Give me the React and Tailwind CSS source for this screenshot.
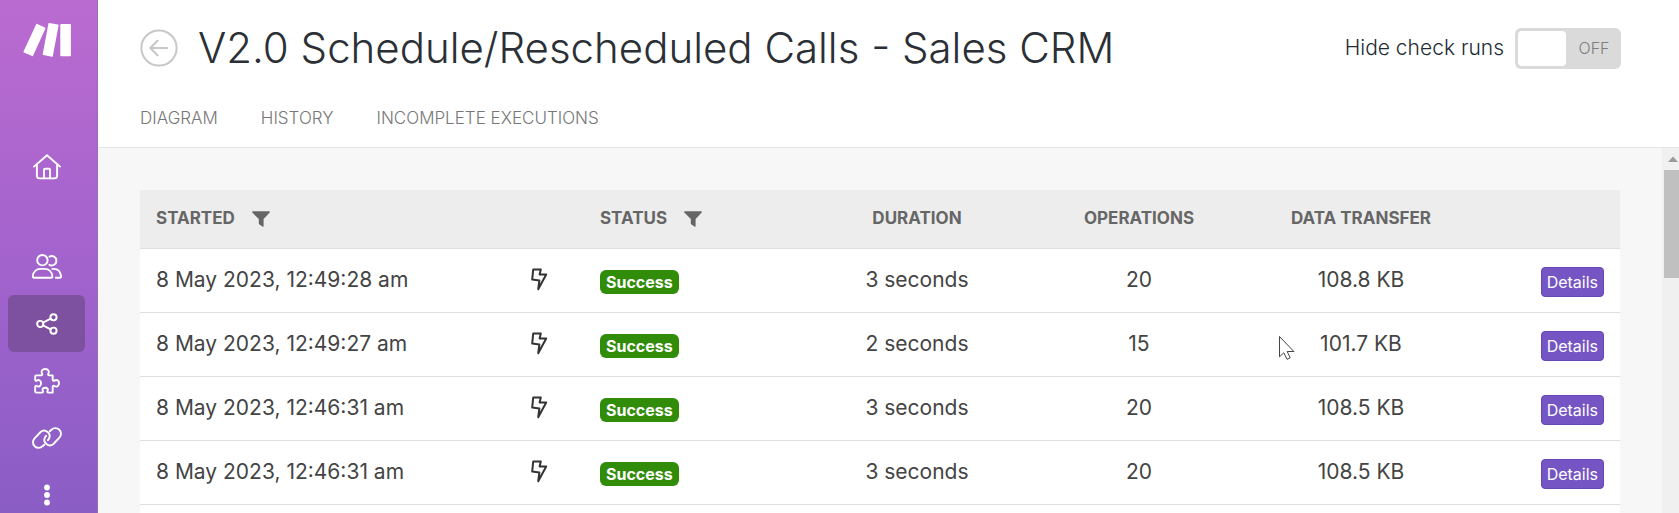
import { useState } from "react";
import clsx from "clsx";

const RUNS = [
  { id: 1, started: "8 May 2023, 12:49:28 am", status: "Success", duration: "3 seconds", operations: 20, transfer: "108.8 KB" },
  { id: 2, started: "8 May 2023, 12:49:27 am", status: "Success", duration: "2 seconds", operations: 15, transfer: "101.7 KB" },
  { id: 3, started: "8 May 2023, 12:46:31 am", status: "Success", duration: "3 seconds", operations: 20, transfer: "108.5 KB" },
  { id: 4, started: "8 May 2023, 12:46:31 am", status: "Success", duration: "3 seconds", operations: 20, transfer: "108.5 KB" },
];

const TABS = ["Diagram", "History", "Incomplete executions"];

function Icon({ width, height, children, className }) {
  return (
    <svg
      width={width}
      height={height}
      viewBox={`0 0 ${width} ${height}`}
      fill="none"
      stroke="currentColor"
      strokeWidth="1.9"
      strokeLinecap="round"
      strokeLinejoin="round"
      className={className}
      aria-hidden="true"
    >
      {children}
    </svg>
  );
}

function HomeIcon() {
  return (
    <Icon width={28} height={26}>
      <path d="M1 12.6 14 1.2l13 11.4" />
      <path d="M3.9 10.4v11.4c0 1.6 1 2.6 2.6 2.6h15c1.6 0 2.6-1 2.6-2.6V10.4" />
      <path d="M11 24.2v-8.4c0-.7.4-1.1 1.1-1.1h3.8c.7 0 1.1.4 1.1 1.1v8.4" />
    </Icon>
  );
}

function TeamIcon() {
  return (
    <Icon width={30} height={25}>
      <circle cx="10.4" cy="6.2" r="5.2" />
      <path d="M17.4 2.6a4.7 4.7 0 1 1 0 8.2" />
      <path d="M2 23.8h17.2c.8 0 1.3-.5 1.2-1.3-.5-4.6-3.6-7.6-7.6-7.6H8.4c-4 0-7.1 3-7.6 7.6-.1.8.4 1.3 1.2 1.3Z" />
      <path d="M20.4 14.9h1.4c4 0 6.7 3 7.3 7.3.1.9-.4 1.6-1.3 1.6h-4" />
    </Icon>
  );
}

function ShareIcon() {
  return (
    <Icon width={22} height={22}>
      <circle cx="4.2" cy="11" r="3.1" />
      <circle cx="17.5" cy="4.3" r="3.1" />
      <circle cx="17.5" cy="17.7" r="3.1" />
      <path d="m7 9.6 7.7-3.9M7 12.4l7.7 3.9" />
    </Icon>
  );
}

function PuzzleIcon() {
  return (
    <Icon width={26} height={26}>
      <path d="M2.3 7.4h4.9c1 0 1.4-.8.9-1.6-1.6-2.5.2-4.8 3.1-4.8s4.7 2.3 3.1 4.8c-.5.8-.1 1.6.9 1.6h3.5v4.3c0 1 .8 1.4 1.6.9 2.5-1.6 4.7.2 4.7 2.7s-2.2 4.3-4.7 2.7c-.8-.5-1.6-.1-1.6.9v5.7h-4.3c-1 0-1.4-.8-.9-1.6 1.1-1.8-.2-3.3-2.3-3.3s-3.4 1.5-2.3 3.3c.5.8.1 1.6-.9 1.6H2.3c-.7 0-1.1-.4-1.1-1.1v-4.6c0-1 .8-1.4 1.6-.9 2.2 1.4 4.3-.2 4.3-2.7s-2.1-4.1-4.3-2.7c-.8.5-1.6.1-1.6-.9V8.5c0-.7.4-1.1 1.1-1.1Z" />
    </Icon>
  );
}

function LinkIcon() {
  return (
    <Icon width={30} height={22}>
      <path d="M12.2 17.7 10.6 19.2A5.5 5.5 0 0 1 2.6 11.4L8.6 5A5.5 5.5 0 0 1 16.9 11.9L15.9 13.2" />
      <path d="M17.8 4.3 19.4 2.8A5.5 5.5 0 0 1 27.4 10.6L21.4 17A5.5 5.5 0 0 1 13.1 10.1L14.1 8.8" />
    </Icon>
  );
}

function MoreIcon() {
  return (
    <svg width="8" height="22" viewBox="0 0 8 22" fill="currentColor" aria-hidden="true">
      <circle cx="4" cy="3.5" r="2.9" />
      <circle cx="4" cy="11" r="2.9" />
      <circle cx="4" cy="18.5" r="2.9" />
    </svg>
  );
}

function BoltIcon() {
  return (
    <svg
      width="18"
      height="23"
      viewBox="0 0 18 23"
      fill="none"
      stroke="#333"
      strokeWidth="2"
      strokeLinejoin="round"
      className="mx-auto mb-[2px]"
      role="img"
      aria-label="Instant trigger"
    >
      <path d="M2.2 1.5h7.6L8.6 6.6h6.6L7.2 21.2l1.2-8.7-7.2-.9Z" />
    </svg>
  );
}

function FilterIcon() {
  return (
    <svg width="18" height="16" viewBox="0 0 18 16" fill="currentColor" aria-hidden="true">
      <path d="M.9.3h16.2c.8 0 1.1.8.6 1.3L11.6 8v7c0 .7-.7 1-1.2.6l-3.200-2.300a.8.8 0 0 1-.4-.7V8L.3 1.600C-.2 1.100.1.300.9.300Z" />
    </svg>
  );
}

function Logo() {
  return (
    <svg width="48" height="34" viewBox="0 0 48 34" fill="currentColor" aria-hidden="true">
      <path d="M14.3.9 22 4.5c.5.2.6.6.4 1L10.1 32.7c-.2.5-.6.6-1 .4L.9 29.4c-.5-.2-.6-.6-.4-1L13.2 1.3c.3-.5.7-.6 1.1-.4Z" />
      <path d="M26.3.1 35 1.5c.5.1.7.4.6.9l-5.8 30.8c-.1.5-.4.7-.9.6l-8.600-1.700c-.5-.1-.7-.4-.6-.9L25.400.7c.1-.5.4-.7.9-.6Z" />
      <path d="M38.1 1h9c.5 0 .8.3.8.8v30.600c0 .5-.3.8-.8.8h-9c-.5 0-.8-.3-.8-.8V1.800c0-.5.3-.8.8-.8Z" />
    </svg>
  );
}

function NavItem({ label, active, children }) {
  return (
    <a
      href="#"
      aria-label={label}
      aria-current={active ? "page" : undefined}
      className={clsx(
        "flex h-[57px] shrink-0 items-center justify-center rounded-md",
        active && "bg-[#7d519f]"
      )}
    >
      {children}
    </a>
  );
}

function Sidebar() {
  return (
    <nav
      aria-label="Main"
      className="flex w-[98px] shrink-0 flex-col overflow-hidden border-r border-[#9a6fb0] bg-linear-to-b from-[#ba6bd0] via-[#a363cd] to-[#8a5dc5] pr-3 pl-2 text-white"
    >
      <a href="#" aria-label="Home page" className="mt-[23px] flex justify-center">
        <Logo />
      </a>
      <div className="mt-[81px] flex flex-col">
        <NavItem label="Organization">
          <HomeIcon />
        </NavItem>
      </div>
      <div className="mt-[43px] flex flex-col">
        <NavItem label="Team">
          <TeamIcon />
        </NavItem>
        <NavItem label="Scenarios" active>
          <ShareIcon />
        </NavItem>
        <NavItem label="Templates">
          <PuzzleIcon />
        </NavItem>
        <NavItem label="Connections">
          <LinkIcon />
        </NavItem>
        <NavItem label="More">
          <MoreIcon />
        </NavItem>
      </div>
    </nav>
  );
}

function Toggle({ id, checked, onChange }) {
  return (
    <span className="relative flex h-[41px] w-[106px] items-center rounded-md bg-[#dadada] p-[3px]">
      <input
        id={id}
        type="checkbox"
        role="switch"
        checked={checked}
        onChange={(event) => onChange(event.target.checked)}
        className="absolute inset-0 z-10 cursor-pointer opacity-0"
      />
      <span className={clsx("h-full w-12 rounded bg-white", checked && "order-last")} />
      <span className="flex-1 pl-1 text-center text-base font-light text-[#7d7d7d]">
        {checked ? "ON" : "OFF"}
      </span>
    </span>
  );
}

function Header() {
  const [hideChecks, setHideChecks] = useState(false);

  return (
    <header className="border-b border-[#e4e4e4] bg-white pr-[58px] pl-[42px]">
      <div className="flex items-center justify-between pt-[17px]">
        <div className="flex items-center gap-5">
          <button type="button" aria-label="Back" className="text-[#c8c8c8]">
            <Icon width={38} height={38}>
              <circle cx="19" cy="19" r="17.6" strokeWidth="2" />
              <path d="M27 19H10.5M17.5 11.8 10.3 19l7.2 7.2" strokeWidth="2.2" />
            </Icon>
          </button>
          <h1 className="text-[42px] leading-[62px] font-light text-[#2b3036]">
            V2.0 Schedule/Rescheduled Calls - Sales CRM
          </h1>
        </div>
        <div className="flex items-center gap-[11px]">
          <label htmlFor="hide-checks" className="text-[21px] font-light text-[#222b33]">
            Hide check runs
          </label>
          <Toggle id="hide-checks" checked={hideChecks} onChange={setHideChecks} />
        </div>
      </div>
      <div className="flex gap-[43px] pt-[26px] pb-[15px]">
        {TABS.map((tab) => (
          <a key={tab} href="#" className="text-[17px] leading-[27px] font-light text-[#777] uppercase">
            {tab}
          </a>
        ))}
      </div>
    </header>
  );
}

function FilterHeading({ children, label }) {
  return (
    <div className="flex items-center gap-[17px]">
      {children}
      <button type="button" aria-label={label}>
        <FilterIcon />
      </button>
    </div>
  );
}

function RunsTable() {
  return (
    <table className="w-full table-fixed border-collapse text-center text-[21px] text-[#444]">
      <colgroup>
        <col className="w-[24%]" />
        <col className="w-[6%]" />
        <col className="w-[15%]" />
        <col className="w-[15%]" />
        <col className="w-[15%]" />
        <col className="w-[15%]" />
        <col className="w-[10%]" />
      </colgroup>
      <thead>
        <tr className="h-[58px] border-b border-[#dedede] bg-[#ededed] text-[17px] text-[#666] uppercase">
          <th className="px-4 text-left font-bold">
            <FilterHeading label="Filter by start date">Started</FilterHeading>
          </th>
          <td />
          <th className="px-4 text-left font-bold">
            <FilterHeading label="Filter by status">Status</FilterHeading>
          </th>
          <th className="font-bold">Duration</th>
          <th className="font-bold">Operations</th>
          <th className="font-bold">Data transfer</th>
          <td />
        </tr>
      </thead>
      <tbody>
        {RUNS.map((run) => (
          <tr key={run.id} className="h-16 border-b border-[#dedede]">
            <td className="px-4 text-left whitespace-nowrap">{run.started}</td>
            <td>
              <BoltIcon />
            </td>
            <td className="px-4 text-left">
              <span className="mt-[3px] block w-fit rounded-md bg-[#318c0a] px-[6px] text-base leading-6 font-bold text-white">
                {run.status}
              </span>
            </td>
            <td>{run.duration}</td>
            <td>{run.operations}</td>
            <td>{run.transfer}</td>
            <td className="px-4">
              <button
                type="button"
                className="mt-[3px] ml-auto block rounded border border-[#6647b4] bg-[#7555c3] px-[5px] text-base leading-7 font-normal text-white"
              >
                Details
              </button>
            </td>
          </tr>
        ))}
      </tbody>
    </table>
  );
}

function ScrollTrack() {
  return (
    <div aria-hidden="true" className="flex w-[17px] shrink-0 flex-col bg-[#f0f0f0] pl-[2px]">
      <svg width="15" height="22" viewBox="0 0 15 22" fill="#9b9b9b">
        <path d="M4 14 9 8.5l5 5.5Z" />
      </svg>
      <div className="h-[108px] bg-[#c0c0c0]" />
    </div>
  );
}

function Pointer() {
  return (
    <svg
      width="18"
      height="26"
      viewBox="0 0 18 26"
      fill="#fff"
      stroke="#444"
      strokeWidth="1"
      className="pointer-events-none absolute top-[335px] left-[1278px]"
      aria-hidden="true"
    >
      <path d="M1.5 1.5v20.3l4.3-4 3.2 6.5 3.2-1.5-3-6.3h6.7Z" />
    </svg>
  );
}

export default function App() {
  return (
    <div className="relative flex h-screen overflow-hidden bg-[#f7f7f7] font-['Inter',sans-serif]">
      <Sidebar />
      <div className="flex min-w-0 flex-1 flex-col">
        <Header />
        <div className="flex min-h-0 flex-1">
          <main className="flex min-w-0 flex-1 flex-col overflow-hidden px-[42px] pt-[42px]">
            <div className="flex-1 bg-white">
              <RunsTable />
            </div>
          </main>
          <ScrollTrack />
        </div>
      </div>
      <Pointer />
    </div>
  );
}
